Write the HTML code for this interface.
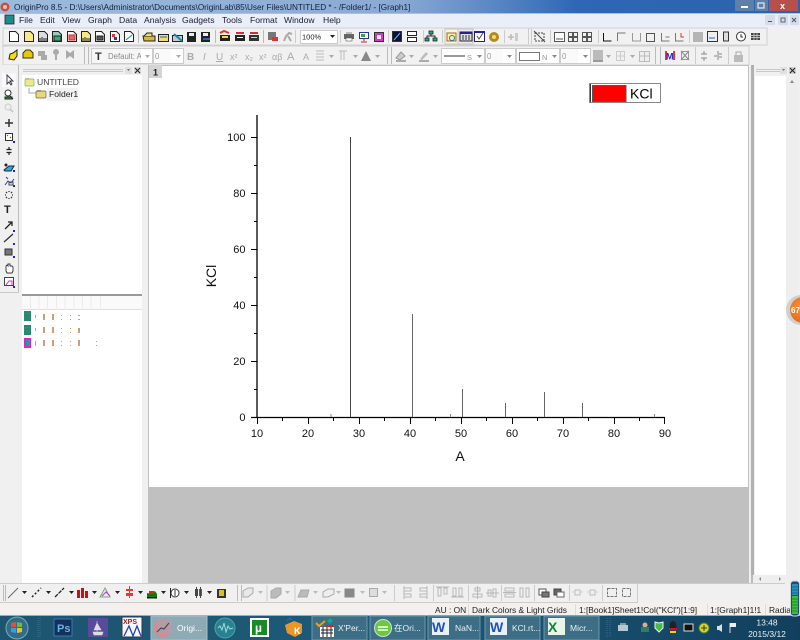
<!DOCTYPE html>
<html><head><meta charset="utf-8"><style>
html,body{margin:0;padding:0;width:800px;height:640px;overflow:hidden;background:#f0f0f0}
svg{display:block;filter:blur(.3px)}
text{font-family:"Liberation Sans",sans-serif}
</style></head><body>
<svg width="800" height="640" viewBox="0 0 800 640" xmlns="http://www.w3.org/2000/svg">
<defs>
<linearGradient id="tb2" x1="0" y1="0" x2="1" y2="0"><stop offset="0" stop-color="#9dbbdc"/><stop offset=".5" stop-color="#8aaad4"/><stop offset=".72" stop-color="#2f67b6"/><stop offset="1" stop-color="#2a62ae"/></linearGradient>
<linearGradient id="task" x1="0" y1="0" x2="1" y2="0"><stop offset="0" stop-color="#1d5570"/><stop offset=".5" stop-color="#1d5a78"/><stop offset="1" stop-color="#123f5e"/></linearGradient>
<radialGradient id="or" cx=".4" cy=".4"><stop offset="0" stop-color="#f8923a"/><stop offset="1" stop-color="#e8701c"/></radialGradient>
</defs>

<rect width="800" height="640" fill="#f0f0f0"/>

<!-- title bar -->
<rect x="0" y="0" width="800" height="13" fill="url(#tb2)"/>
<circle cx="5" cy="7" r="4.500" fill="#c8503c"/><circle cx="5" cy="7" r="2" fill="#eec0b0"/>
<text x="14" y="10" font-size="8.200" fill="#10203c">OriginPro 8.5 - D:\Users\Administrator\Documents\OriginLab\85\User Files\UNTITLED * - /Folder1/ - [Graph1]</text>
<rect x="735" y="0" width="19" height="11" fill="#5d7fa8"/>
<rect x="755" y="0" width="13" height="11" fill="#5d7fa8"/>
<rect x="769" y="0" width="29" height="11" fill="#b5504a"/>
<rect x="741" y="6" width="7" height="2" fill="#fff"/>
<rect x="758" y="3" width="6" height="5" fill="none" stroke="#fff"/>
<text x="780" y="9" font-size="9" font-weight="bold" fill="#fff">x</text>

<!-- menu bar -->
<rect x="0" y="13" width="800" height="14" fill="#e9eef9"/>
<rect x="0" y="13" width="800" height="1" fill="#a9c0e0"/>
<rect x="5" y="15" width="9" height="9" fill="#1f8c8c" stroke="#222" stroke-width=".8"/>
<g font-size="8.600" fill="#1c1c30">
<text x="19" y="23">File</text><text x="40" y="23">Edit</text><text x="62" y="23">View</text><text x="88" y="23">Graph</text><text x="119" y="23">Data</text><text x="144" y="23">Analysis</text><text x="182" y="23">Gadgets</text><text x="222" y="23">Tools</text><text x="250" y="23">Format</text><text x="284" y="23">Window</text><text x="323" y="23">Help</text>
</g>
<rect x="765" y="15" width="10" height="10" fill="#d5dcea"/><rect x="778" y="15" width="10" height="10" fill="#d5dcea"/><rect x="790" y="15" width="9" height="10" fill="#d5dcea"/>
<rect x="768" y="21" width="4" height="1" fill="#556"/><rect x="781" y="18" width="4" height="4" fill="none" stroke="#667"/><path d="M792 18l4 4m0-4l-4 4" stroke="#556"/>

<!-- toolbars -->
<rect x="0" y="27" width="800" height="38" fill="#f0f0f0"/>
<rect x="3" y="28" width="764" height="17" fill="#f1f1f1" stroke="#d0d0d0"/>
<rect x="3" y="46" width="746" height="19" fill="#f1f1f1" stroke="#d0d0d0"/>

<!-- toolbar 1 icons -->
<g stroke="#222" stroke-width="1">
<path d="M9.500 31.500h6l3 3v7h-9z" fill="#fff"/>
<path d="M24.500 31.500h6l3 3v7h-9z" fill="#f7e98a"/>
<path d="M38.500 31.500h6l3 3v7h-9z" fill="#ddd"/><path d="M40 38v3m2-4v4m2-3v3m2-3v3"/>
<path d="M52.500 31.500h6l3 3v7h-9z" fill="#9cb"/><path d="M54 36h7v5h-7z" fill="#3a7"/>
<path d="M67.500 31.500h6l3 3v7h-9z" fill="#fff"/><rect x="69" y="35" width="6" height="5" fill="#e66" stroke="#c33"/>
<path d="M81.500 31.500h6l3 3v7h-9z" fill="#f7e98a"/><path d="M83 38v3m2-4v4m2-3v3m2-3v3"/>
<path d="M95.500 31.500h6l3 3v7h-9z" fill="#fff"/><rect x="97" y="36" width="6" height="4" fill="#555"/>
<path d="M110.500 31.500h6l3 3v7h-9z" fill="#fff"/><rect x="112" y="34" width="3" height="3" fill="#e33" stroke="none"/><rect x="114" y="37" width="3" height="3" fill="#33d" stroke="none"/>
<path d="M124.500 31.500h6l3 3v7h-9z" fill="#fff"/><path d="M126 40l6-5" stroke="#289"/>
</g>
<rect x="138" y="30" width="1" height="13" fill="#bbb"/>
<g stroke="#222">
<path d="M143 36h12v5h-11z" fill="#d7b93a"/><path d="M144 36l3-3h5v3" fill="#f0dc70"/>
<path d="M158.500 34.500h10v7h-10z" fill="#f0dc70"/><path d="M160 37h7" stroke="#26a"/>
<path d="M172.500 35.500h10v6h-10z" fill="#bcd"/><path d="M174 34l8 7" stroke="#289" stroke-width="2"/>
<rect x="187.500" y="32.500" width="8" height="9" fill="#222"/><rect x="189" y="33" width="5" height="3" fill="#eee" stroke="none"/>
<rect x="201.500" y="32.500" width="8" height="9" fill="#222"/><rect x="203" y="33" width="5" height="3" fill="#eee" stroke="none"/><rect x="203" y="38" width="7" height="2" fill="#26c" stroke="none"/>
</g>
<rect x="215" y="30" width="1" height="13" fill="#bbb"/>
<rect x="220" y="35" width="10" height="6" fill="#222"/><path d="M220 33l4-2 5 2" stroke="#d33" stroke-width="2" fill="none"/><rect x="222" y="36" width="6" height="2" fill="#fd3"/>
<rect x="235" y="35" width="10" height="6" fill="#222"/><path d="M236 33h8" stroke="#c33" stroke-width="2"/><rect x="237" y="37" width="6" height="1" fill="#fff"/>
<rect x="249" y="35" width="10" height="6" fill="#333"/><path d="M250 33h8" stroke="#c33" stroke-width="2"/><rect x="251" y="37" width="6" height="1" fill="#ccc"/>
<rect x="263" y="30" width="1" height="13" fill="#bbb"/>
<rect x="268" y="32" width="8" height="8" fill="#777"/><rect x="272" y="37" width="6" height="4" fill="#d33"/>
<path d="M284 41l2-5 3-3 3 1m-4 2l3 5" stroke="#aaa" stroke-width="2" fill="none"/>
<rect x="295" y="30" width="1" height="13" fill="#ccc"/>
<rect x="300.500" y="30.500" width="37" height="13" fill="#fff" stroke="#ccc"/>
<text x="302" y="39.500" font-size="7.500" fill="#222">100%</text>
<path d="M330 35h5l-2.500 3z" fill="#222"/>
<rect x="340" y="30" width="1" height="13" fill="#ccc"/>
<rect x="344" y="34" width="10" height="5" fill="#666"/><rect x="346" y="32" width="6" height="2" fill="#bbb"/><rect x="346" y="38" width="6" height="3" fill="#fff" stroke="#444" stroke-width=".5"/>
<rect x="359.500" y="32.500" width="9" height="6" fill="#fff" stroke="#23a"/><path d="M364 38v3m-3 1h6" stroke="#a22"/><rect x="361" y="34" width="4" height="3" fill="#3a3"/>
<rect x="374.500" y="32.500" width="9" height="9" fill="#d3c" stroke="#333"/><rect x="377" y="35" width="4" height="4" fill="#fff"/>
<rect x="388" y="30" width="1" height="13" fill="#ccc"/>
<rect x="392.500" y="31.500" width="9" height="10" fill="#113" stroke="#333"/><path d="M394 40l6-7" stroke="#3cf"/>
<rect x="407.500" y="31.500" width="9" height="4" fill="#fff" stroke="#224"/><rect x="407.500" y="37.500" width="9" height="4" fill="#fff" stroke="#224"/>
<rect x="423" y="30" width="1" height="13" fill="#ccc"/>
<g fill="#2a8" stroke="#222" stroke-width=".8"><rect x="429" y="31" width="4" height="3"/><rect x="425" y="38" width="4" height="3"/><rect x="433" y="38" width="4" height="3"/></g>
<path d="M431 34v2m-4 2v-2h8v2" stroke="#222" fill="none"/>
<rect x="442" y="30" width="1" height="13" fill="#ccc"/>
<rect x="445" y="29" width="13" height="15" fill="#fbf6d8" stroke="#c8c8c8"/><rect x="447" y="33" width="9" height="8" fill="#fdf0a0" stroke="#963"/><circle cx="452" cy="38" r="2.500" fill="none" stroke="#27b"/>
<rect x="458" y="29" width="15" height="15" fill="#ececec" stroke="#c8c8c8"/><rect x="460" y="32" width="12" height="9" fill="#ddd" stroke="#223"/><rect x="460" y="32" width="12" height="2" fill="#228"/><path d="M463 35v5m3-5v5m3-5v5" stroke="#333"/>
<rect x="474.500" y="31.500" width="10" height="10" fill="#fff" stroke="#226"/><rect x="474" y="31" width="11" height="2" fill="#22a"/><path d="M477 36l2 3 4-6" stroke="#353" fill="none"/>
<circle cx="494" cy="37" r="5" fill="#b58a1c"/><circle cx="494" cy="37" r="2" fill="#f0dc70"/>
<rect x="504" y="30" width="1" height="13" fill="#ccc"/>
<path d="M508 37h6m-3-3v6" stroke="#bbb" stroke-width="1.500"/><rect x="515" y="33" width="3" height="8" fill="#ccc"/>
<rect x="528" y="28" width="1" height="16" fill="#ccc"/><rect x="531" y="28" width="1" height="16" fill="#ccc"/>
<rect x="535" y="33" width="9" height="8" fill="none" stroke="#444" stroke-dasharray="2 1"/><path d="M534 31l11 11" stroke="#444"/>
<rect x="550" y="30" width="1" height="13" fill="#ccc"/>
<g fill="none" stroke="#555">
<rect x="554.500" y="32.500" width="10" height="9" fill="#fff"/><path d="M556 39h7"/>
<rect x="568.500" y="32.500" width="4" height="4"/><rect x="573.500" y="32.500" width="4" height="4"/><rect x="568.500" y="37.500" width="4" height="4"/><rect x="573.500" y="37.500" width="4" height="4"/>
<rect x="582.500" y="32.500" width="4" height="4"/><rect x="587.500" y="32.500" width="4" height="4"/><rect x="582.500" y="37.500" width="4" height="4"/><rect x="587.500" y="37.500" width="4" height="4"/>
</g>
<rect x="598" y="30" width="1" height="13" fill="#ccc"/>
<g fill="none" stroke-width="1">
<path d="M603.500 33v8h8" stroke="#111"/><path d="M617.500 41v-8h8" stroke="#777"/><path d="M632.500 33v8h8v-8" stroke="#999"/><rect x="646.500" y="33.500" width="8" height="8" stroke="#555"/>
<path d="M661.500 33v8h8m-4-4h4" stroke="#777"/><path d="M675.500 33v8h8" stroke="#777"/><path d="M681 33v4h3" stroke="#d33"/>
</g>
<rect x="689" y="30" width="1" height="13" fill="#ccc"/>
<path d="M693 33h10M693 35h10M693 37h10M693 39h10M693 41h10" stroke="#777"/>
<rect x="707.500" y="31.500" width="10" height="10" fill="#eee" stroke="#333"/><path d="M709 38h6" stroke="#26c"/>
<rect x="723.500" y="32" width="5" height="9" fill="#ddd" stroke="#333"/>
<circle cx="741" cy="36.500" r="4.500" fill="#fff" stroke="#333"/><path d="M741 34v3h2" stroke="#333" fill="none"/>
<rect x="751" y="33" width="9" height="7" fill="#444"/><path d="M751 35.500h9M751 37.500h9M754 33v7M757 33v7" stroke="#ddd" stroke-width=".7"/>

<!-- toolbar 2 -->
<path d="M9 59l1-5 3-1 4-3v6l-3 4z" fill="#f5e000" stroke="#222"/>
<path d="M23 58v-5l3-3h4l3 3v5z" fill="#e8c800" stroke="#332"/>
<rect x="38" y="51" width="7" height="5" fill="#aaa"/><rect x="41" y="55" width="6" height="5" fill="#aaa"/>
<circle cx="56" cy="52" r="3" fill="#aaa"/><path d="M56 55v5" stroke="#aaa" stroke-width="2"/>
<path d="M66 50l4 3 4-3v9l-4-3-4 3z" fill="#aaa"/>
<rect x="84" y="47" width="1" height="17" fill="#bbb"/><rect x="88" y="47" width="1" height="17" fill="#bbb"/>
<rect x="91.500" y="48.500" width="61" height="15" fill="#f6f6f6" stroke="#ccc"/>
<text x="95" y="60" font-family="Liberation Serif" font-size="11" font-weight="bold" fill="#333">T</text>
<text x="108" y="59" font-size="7.800" fill="#8a8a8a">Default: A</text>
<rect x="141" y="49" width="11" height="14" fill="#fff"/><path d="M145 55h5l-2.500 3z" fill="#aaa"/>
<rect x="153.500" y="48.500" width="30" height="15" fill="#fafafa" stroke="#ccc"/>
<text x="155" y="59" font-size="7.800" fill="#999">0</text><rect x="171" y="49" width="12" height="14" fill="#fff"/><path d="M176 55h5l-2.500 3z" fill="#aaa"/>
<g fill="#aaa" font-family="Liberation Serif" font-size="9">
<text x="187" y="60" font-weight="bold" font-size="10">B</text><text x="203" y="60" font-style="italic" font-size="10">I</text><text x="216" y="60" text-decoration="underline" font-size="10">U</text>
<text x="230" y="60">x²</text><text x="245" y="60">x₂</text><text x="259" y="60">x²</text><text x="272" y="60">αβ</text>
<text x="287" y="60" font-size="11">A</text><text x="303" y="60">A</text>
</g>
<path d="M316 51h8M316 54h8M316 57h8M316 60h8" stroke="#bbb"/><path d="M329 55h5l-2.500 3z" fill="#aaa"/>
<path d="M339 51h8M341 51v9M344 51v9" stroke="#bbb"/><path d="M353 55h5l-2.500 3z" fill="#aaa"/>
<path d="M361 61h10l-5-10z" fill="#888"/><path d="M375 55h5l-2.500 3z" fill="#aaa"/>
<rect x="387" y="47" width="1" height="17" fill="#bbb"/><rect x="391" y="47" width="1" height="17" fill="#bbb"/>
<path d="M396 58l5-6 4 4-5 4z" fill="#ccc" stroke="#999"/><rect x="396" y="60" width="10" height="2" fill="#aaa"/><path d="M409 55h5l-2.500 3z" fill="#aaa"/>
<path d="M420 59l6-7 2 2-6 6z" fill="#bbb"/><rect x="419" y="60" width="10" height="2" fill="#aaa"/><path d="M433 55h5l-2.500 3z" fill="#aaa"/>
<rect x="441.500" y="48.500" width="43" height="15" fill="#fff" stroke="#ccc"/><path d="M444 56h21" stroke="#333"/><text x="467" y="60" font-size="7.500" fill="#999">S</text><path d="M477 55h5l-2.500 3z" fill="#888"/>
<rect x="485.500" y="48.500" width="30" height="15" fill="#fafafa" stroke="#ccc"/><text x="487" y="59" font-size="7.800" fill="#999">0</text><rect x="503" y="49" width="12" height="14" fill="#fff"/><path d="M507 55h5l-2.500 3z" fill="#888"/>
<rect x="516.500" y="48.500" width="43" height="15" fill="#fff" stroke="#ccc"/><rect x="519.500" y="52.500" width="20" height="8" fill="#fff" stroke="#777"/><text x="542" y="60" font-size="7.500" fill="#999">N</text><path d="M552 55h5l-2.500 3z" fill="#888"/>
<rect x="560.500" y="48.500" width="30" height="15" fill="#fafafa" stroke="#ccc"/><text x="562" y="59" font-size="7.800" fill="#999">0</text><rect x="578" y="49" width="12" height="14" fill="#fff"/><path d="M583 55h5l-2.500 3z" fill="#888"/>
<rect x="593" y="50" width="10" height="10" fill="#bbb"/><rect x="593" y="60" width="10" height="2" fill="#999"/><path d="M606 55h5l-2.500 3z" fill="#aaa"/>
<rect x="616.500" y="51.500" width="8" height="9" fill="none" stroke="#ccc"/><path d="M620.500 51v9M616 56h9" stroke="#ccc"/><path d="M630 55h5l-2.500 3z" fill="#aaa"/>
<rect x="639.500" y="51.500" width="10" height="10" fill="#eee" stroke="#bbb"/><path d="M640 56h9M644.500 51v10" stroke="#bbb"/>
<rect x="655" y="47" width="1" height="17" fill="#bbb"/><rect x="660" y="47" width="1" height="17" fill="#bbb"/>
<rect x="666" y="51" width="8" height="9" fill="#fff"/><rect x="665" y="51" width="2" height="9" fill="#e33"/><rect x="673" y="51" width="2" height="9" fill="#e33"/>
<text x="666" y="59.500" font-size="9" font-weight="bold" fill="#22c">M</text>
<rect x="681.500" y="51.500" width="7" height="8" fill="none" stroke="#999"/><path d="M681 51l8 9m0-9l-8 9" stroke="#888"/>
<rect x="695" y="47" width="1" height="17" fill="#ccc"/>
<path d="M704 51v3m0 4v3M701 54h6M701 58h6" stroke="#888" fill="none"/><path d="M718 51v9M714 56h3M719 54h3M719 57h3" stroke="#888"/>
<rect x="728" y="47" width="1" height="17" fill="#ccc"/>
<rect x="734" y="55" width="9" height="7" fill="#bbb"/><path d="M736 55v-3h5v3" fill="none" stroke="#aaa"/>

<!-- left toolbar -->
<rect x="0" y="65" width="22" height="528" fill="#f0f0f0"/>
<rect x="18" y="65" width="1" height="228" fill="#bdbdbd"/>
<rect x="0" y="292" width="19" height="1" fill="#c8c8c8"/>
<rect x="2" y="73" width="14" height="14" fill="#f9f9f9"/>
<path d="M7 75v9l2-2 2 3 1-1-2-3h3z" fill="#fff" stroke="#334" stroke-width=".9"/>
<circle cx="8" cy="93" r="3" fill="#fff" stroke="#333"/><path d="M5 97h7v2h-7zM10 96l3 3" stroke="#222" fill="#3a3"/>
<circle cx="8" cy="107" r="3" fill="none" stroke="#ccc"/><path d="M10 109l3 3" stroke="#ccc" stroke-width="2"/>
<path d="M9 119v8M5 123h8" stroke="#333" stroke-width="1.500"/>
<rect x="5.500" y="133.500" width="7" height="7" fill="#fff" stroke="#333"/><path d="M7 135l1 1m2 1l1 1" stroke="#555"/>
<path d="M9 147v3m0 2v3M6.500 149.500h5M6.500 152.500h5" stroke="#222" stroke-width="1.200"/>
<path d="M4 170l5-4h5l-3 5h-6z" fill="#16b3e3" stroke="#224"/><circle cx="6" cy="165" r="1.500" fill="#222"/>
<path d="M5 185l3-4 3 2 3-4" stroke="#33c" fill="none"/><path d="M6 177l2 2M9 182h4v3h-4z" stroke="#444" fill="none"/>
<path d="M9 191v1M9 198v1M5 195h1M12 195h1M6 192l1 1M12 192l-1 1M6 198l1-1M12 198l-1-1" stroke="#333" stroke-width="1.300"/>
<text x="4" y="213" font-family="Liberation Serif" font-size="11" font-weight="bold" fill="#222">T</text>
<path d="M5 229l7-7m-4 0h4v4" stroke="#222" stroke-width="1.300" fill="none"/>
<path d="M4 242l9-8" stroke="#333" stroke-width="1.300"/>
<rect x="5" y="249" width="7" height="6" fill="#777" stroke="#333"/>
<path d="M6 271v-5l1-1 1 1v-2h2v2l2 0 1 1v4l-1 2h-5z" fill="#fff" stroke="#333" stroke-width=".9"/>
<rect x="4.500" y="277.500" width="9" height="8" fill="#fff" stroke="#444"/><path d="M6 285l3-4h3v4" stroke="#c3c" fill="none"/>
<g fill="#22c"><rect x="13" y="141" width="2" height="2"/><rect x="13" y="170" width="2" height="2"/><rect x="13" y="185" width="2" height="2"/><rect x="13" y="230" width="2" height="2"/><rect x="13" y="243" width="2" height="2"/><rect x="13" y="256" width="2" height="2"/><rect x="13" y="286" width="2" height="2"/></g>

<!-- project explorer -->
<rect x="22" y="65" width="126" height="518" fill="#f0f0f0"/>
<rect x="22" y="75" width="120" height="508" fill="#fff"/>
<path d="M23 69.500h100M23 71.500h100" stroke="#c8c8c8"/>
<rect x="125" y="67" width="7" height="7" fill="#e0e0e0"/><rect x="134" y="67" width="7" height="7" fill="#d8d8d8"/>
<path d="M127 69h3l-1.500 2z" fill="#777"/><path d="M135 68l5 5m0-5l-5 5" stroke="#222"/>
<rect x="25" y="79" width="9" height="7" rx="1" fill="#f0e68c" stroke="#6b6" stroke-width=".7"/><rect x="25" y="78" width="4" height="2" fill="#bba"/>
<text x="37" y="85" font-size="8.600" fill="#444">UNTITLED</text>
<path d="M29 88v5h7" stroke="#aaa" fill="none"/>
<rect x="47" y="88" width="31" height="13" fill="#f2f2f2"/>
<rect x="36" y="91" width="10" height="7" rx="1" fill="#e9d778" stroke="#665" stroke-width=".7"/><rect x="37" y="90" width="4" height="2" fill="#998"/>
<text x="49" y="97" font-size="8.600" fill="#222">Folder1</text>
<rect x="22" y="294" width="120" height="2" fill="#999"/>
<rect x="22" y="296" width="120" height="13" fill="#fafafa"/>
<rect x="22" y="309" width="120" height="1" fill="#e0e0e0"/>
<path d="M30.500 296v14M39 296v14M47.500 296v14M56.500 296v14M65 296v14M74 296v14M82.500 296v14M91 296v14M100.500 296v14" stroke="#ececec"/>
<rect x="24" y="311" width="7" height="10" fill="#2a8a70"/><rect x="25" y="313" width="5" height="1" fill="#d44"/>
<rect x="24" y="325" width="7" height="10" fill="#2a8a70"/><rect x="25" y="327" width="5" height="1" fill="#d44"/>
<rect x="24" y="338" width="7" height="10" fill="#e020d0"/><rect x="26" y="340" width="4" height="6" fill="#16a0a0"/>
<g fill="#c9a078">
<rect x="35" y="315" width="1" height="3"/><rect x="43" y="314" width="2" height="6"/><rect x="52" y="314" width="2" height="6"/><rect x="61" y="315" width="1" height="1"/><rect x="61" y="319" width="1" height="1"/><rect x="70" y="315" width="1" height="1"/><rect x="70" y="319" width="1" height="1"/><rect x="78" y="315" width="2" height="1"/><rect x="78" y="319" width="2" height="1"/>
<rect x="35" y="328" width="1" height="3"/><rect x="43" y="327" width="2" height="6"/><rect x="52" y="327" width="2" height="6"/><rect x="61" y="328" width="1" height="1"/><rect x="61" y="332" width="1" height="1"/><rect x="70" y="328" width="1" height="1"/><rect x="70" y="332" width="1" height="1"/><rect x="78" y="328" width="2" height="5"/>
<rect x="35" y="341" width="1" height="5"/><rect x="43" y="340" width="2" height="6"/><rect x="52" y="340" width="2" height="6"/><rect x="61" y="341" width="1" height="1"/><rect x="61" y="345" width="1" height="1"/><rect x="70" y="341" width="1" height="1"/><rect x="70" y="345" width="1" height="1"/><rect x="78" y="340" width="2" height="6"/><rect x="96" y="341" width="1" height="1"/><rect x="96" y="345" width="1" height="1"/>
</g>

<!-- workspace -->
<rect x="148" y="65" width="601" height="518" fill="#c0c0c0"/>
<rect x="149" y="66" width="599" height="421" fill="#fff"/>
<rect x="149" y="65" width="13" height="13" fill="#d4d4d4"/>
<text x="153" y="75.500" font-size="9" font-weight="bold" fill="#222">1</text>
<rect x="749" y="65" width="6" height="518" fill="#f0f0f0"/>
<rect x="751" y="65" width="3" height="518" fill="#b0b0b0"/>

<!-- legend -->
<rect x="589.500" y="83.500" width="71" height="19" fill="#fff" stroke="#888"/>
<rect x="590" y="84" width="1" height="18" fill="#333"/>
<rect x="592.500" y="85.500" width="33.500" height="16" fill="#ff0000" stroke="#555"/>
<text x="630" y="98.500" font-size="14" fill="#000">KCl</text>

<!-- plot -->
<g stroke="#000" fill="none">
<path d="M257 115V417" stroke-width="1.300"/>
<path d="M251 417.500H665" stroke-width="1.200"/>
<path d="M251 361.500h6M251 305.500h6M251 249.500h6M251 193.500h6M251 137.500h6"/>
<path d="M254 389.500h3M254 333.500h3M254 277.500h3M254 221.500h3M254 165.500h3"/>
<path d="M257.500 417v7M308.500 417v7M359.500 417v7M410.500 417v7M461.500 417v7M512.500 417v7M563.500 417v7M614.500 417v7M664.500 417v7"/>
<path d="M282.500 417v4M333.500 417v4M384.500 417v4M435.500 417v4M486.500 417v4M537.500 417v4M588.500 417v4M639.500 417v4"/>
</g>
<g stroke="#444" fill="none">
<path d="M350.500 137V417"/>
<path d="M412.500 314V417" stroke="#666"/>
<path d="M462.500 389V417" stroke="#666"/>
<path d="M505.500 403V417" stroke="#666"/>
<path d="M544.500 392V417" stroke="#666"/>
<path d="M582.500 403V417" stroke="#666"/>
<path d="M331 414V417" stroke="#888"/>
<path d="M450.500 414V417" stroke="#888"/>
<path d="M654.500 414V417" stroke="#888"/>
</g>
<g font-size="11" fill="#111" text-anchor="end">
<text x="245.500" y="421">0</text><text x="245.500" y="365">20</text><text x="245.500" y="309">40</text><text x="245.500" y="253">60</text><text x="245.500" y="197">80</text><text x="245.500" y="141">100</text>
</g>
<g font-size="11" fill="#111" text-anchor="middle">
<text x="257" y="437">10</text><text x="308" y="437">20</text><text x="359" y="437">30</text><text x="410" y="437">40</text><text x="461" y="437">50</text><text x="512" y="437">60</text><text x="563" y="437">70</text><text x="614" y="437">80</text><text x="665" y="437">90</text>
</g>
<text x="460" y="461" font-size="14" fill="#111" text-anchor="middle">A</text>
<text transform="translate(216 276) rotate(-90)" font-size="14" fill="#111" text-anchor="middle">KCl</text>

<!-- right panel -->
<rect x="755" y="65" width="45" height="518" fill="#f0f0f0"/>
<rect x="755" y="76" width="31" height="507" fill="#fff"/>
<path d="M756 69.500h24M756 71.500h24" stroke="#c8c8c8"/>
<rect x="780" y="67" width="7" height="7" fill="#e0e0e0"/><rect x="789" y="67" width="7" height="7" fill="#d0d0d0"/>
<path d="M782 69h3l-1.500 2z" fill="#777"/><path d="M790 68l5 5m0-5l-5 5" stroke="#222"/>
<rect x="786" y="76" width="12" height="507" fill="#eeeeee"/>
<path d="M790 83h4l-2-3z" fill="#888"/>
<circle cx="801" cy="310" r="15" fill="#cfcfcf"/>
<circle cx="803" cy="310" r="13" fill="url(#or)"/>
<text x="791" y="313" font-size="8" font-weight="bold" fill="#fff">67</text>

<!-- bottom toolbar -->
<rect x="0" y="583" width="800" height="20" fill="#f0f0f0"/>
<rect x="0" y="583" width="785" height="1" fill="#ccc"/>
<rect x="0" y="602" width="637" height="1" fill="#ccc"/>
<rect x="3" y="585" width="1" height="16" fill="#bbb"/><rect x="5" y="585" width="1" height="16" fill="#bbb"/>
<path d="M8 598l10-10" stroke="#666"/><path d="M22 591h5l-2.500 3z" fill="#222"/>
<path d="M32 597l9-9" stroke="#222" stroke-width="1.500" stroke-dasharray="2 2"/><path d="M46 591h5l-2.500 3z" fill="#222"/>
<path d="M55 597l9-9" stroke="#222" stroke-width="1.300" stroke-dasharray="4 1"/><path d="M69 591h5l-2.500 3z" fill="#222"/>
<g fill="#cc1010"><rect x="77" y="590" width="3" height="8"/><rect x="81" y="588" width="3" height="10"/><rect x="85" y="591" width="3" height="7"/></g><path d="M92 591h5l-2.500 3z" fill="#222"/>
<path d="M100 597l5-9 5 9z" fill="#e8e8f8" stroke="#7a7"/><path d="M102 596l4-4 4 4" stroke="#c3c" fill="none"/><path d="M115 591h5l-2.500 3z" fill="#222"/>
<rect x="126" y="589" width="7" height="2" fill="#e33"/><rect x="126" y="593" width="7" height="3" fill="#e33"/><path d="M129.500 586v12" stroke="#e33"/><path d="M138 591h5l-2.500 3z" fill="#222"/>
<path d="M147 598v-5l4 1 4-3 2 3v4z" fill="#0a7a0a"/><rect x="147" y="597" width="10" height="1.500" fill="#111"/><rect x="149" y="591" width="5" height="3" fill="#d22"/><path d="M161 591h5l-2.500 3z" fill="#222"/>
<rect x="170" y="588" width="1" height="10" fill="#222"/><circle cx="175" cy="593" r="4" fill="#fff" stroke="#333"/><rect x="174.500" y="590" width="1" height="6" fill="#333"/><path d="M184 591h5l-2.500 3z" fill="#222"/>
<rect x="195" y="589" width="3" height="7" fill="#444"/><rect x="199" y="589" width="3" height="7" fill="#e02020"/><path d="M196.500 587v11M200.500 587v11" stroke="#444"/><path d="M207 591h5l-2.500 3z" fill="#222"/>
<rect x="217" y="589" width="9" height="9" fill="#333"/><rect x="219" y="590" width="5" height="6" fill="#d8c020"/>
<rect x="237" y="585" width="1" height="16" fill="#bbb"/><rect x="241" y="585" width="1" height="16" fill="#bbb"/>
<g fill="#bbb" stroke="#aaa">
<path d="M243 597v-6l5-3h5v5l-5 4z" fill="#e8e8e8"/><path d="M258 591h5l-2.500 3z" stroke="none"/>
<path d="M267 585v16" fill="none" stroke="#ccc"/>
<path d="M271 598v-7l5-3h5v6l-5 4z"/><path d="M285 591h5l-2.500 3z" stroke="none"/>
<path d="M295 585v16" fill="none" stroke="#ccc"/>
<path d="M298 597l3-7h8l-2 7z"/><path d="M313 591h5l-2.500 3z" stroke="none"/>
<path d="M323 597v-5l5-3h6v5l-6 3z" fill="#eee"/><path d="M336 591h5l-2.500 3z" stroke="none"/>
<rect x="345" y="589" width="9" height="8" fill="#888" stroke="#888"/><path d="M360 591h5l-2.500 3z" stroke="none"/>
<rect x="369.500" y="588.500" width="8" height="8" fill="#ddd"/><path d="M382 591h5l-2.500 3z" stroke="none"/>
</g>
<rect x="394" y="585" width="1" height="16" fill="#ccc"/>
<g fill="none" stroke="#b8b8b8">
<path d="M404 588h7v3h-7zM404 594h7v3h-7zM404 586v13"/>
<path d="M420 588h7v3h-7zM420 594h7v3h-7zM427 586v13"/>
<path d="M438 588h3v8h-3zM444 588h3v6h-3zM436 587h13"/>
<path d="M453 588h3v8h-3zM459 588h3v8h-3zM451 597h13"/>
<path d="M475 588h5v3h-5zM473 594h9v3h-9zM477.500 586v13"/>
<path d="M488 590h3v6h-3zM493 589h3v8h-3zM486 593h13"/>
<path d="M505 588h9v3h-9zM505 594h9v3h-9zM503 592.500h13"/>
<path d="M520 588h3v9h-3zM526 588h3v9h-3z"/>
</g>
<rect x="433" y="585" width="1" height="16" fill="#ccc"/>
<rect x="468" y="585" width="1" height="16" fill="#ccc"/>
<rect x="501" y="585" width="1" height="16" fill="#ccc"/>
<rect x="534" y="585" width="1" height="16" fill="#ccc"/>
<rect x="539" y="589" width="7" height="6" fill="#fff" stroke="#555"/><rect x="542" y="592" width="7" height="5" fill="#777" stroke="#444"/>
<rect x="554" y="589" width="7" height="6" fill="#666" stroke="#444"/><rect x="557" y="592" width="7" height="5" fill="#fff" stroke="#666"/>
<rect x="569" y="585" width="1" height="16" fill="#ccc"/>
<g fill="none" stroke="#bbb"><rect x="575" y="590" width="5" height="5"/><rect x="590" y="590" width="5" height="5"/></g>
<path d="M572 592h2M581 592h2M587 592h2M596 592h2" stroke="#ccc"/>
<rect x="602" y="585" width="1" height="16" fill="#ccc"/>
<rect x="607.500" y="588.500" width="9" height="8" fill="none" stroke="#777" stroke-dasharray="3 1"/><rect x="622.500" y="588.500" width="8" height="8" fill="none" stroke="#777" stroke-dasharray="3 1"/>
<rect x="637" y="583" width="1" height="20" fill="#ccc"/>
<rect x="638" y="584" width="150" height="18" fill="#f0f0f0"/>
<rect x="753" y="575" width="33" height="8" fill="#eee"/>
<path d="M761 577v4l-2-2zM779 577v4l2-2z" fill="#888"/>
<rect x="751" y="575" width="2" height="8" fill="#bbb"/>

<!-- status bar -->
<rect x="0" y="603" width="800" height="13" fill="#f3f0ee"/>
<path d="M468.500 604v11M575.500 604v11M707.500 604v11M765.500 604v11" stroke="#dcdcdc"/>
<g font-size="8.400" fill="#222">
<text x="435" y="613">AU : ON</text>
<text x="472" y="613">Dark Colors &amp; Light Grids</text>
<text x="579" y="613">1:[Book1]Sheet1!Col("KCl")[1:9]</text>
<text x="710" y="613">1:[Graph1]1!1</text>
<text x="769" y="613">Radian</text>
</g>

<!-- taskbar -->
<rect x="0" y="615" width="800" height="25" fill="url(#task)"/>
<rect x="0" y="615" width="800" height="1" fill="#8fb0bf"/>
<circle cx="17" cy="628" r="11" fill="#2f6e88" stroke="#7fa8b8"/>
<path d="M11 623l5-1v5h-5z" fill="#e8502c"/><path d="M17 622l5 1v4h-5z" fill="#74b838"/><path d="M11 628h5v5l-5-1z" fill="#3c9ae0"/><path d="M17 628h5v4l-5 1z" fill="#f0c020"/>
<path d="M38 618v20M40 618v20" stroke="#3a6e86" stroke-dasharray="1 1"/>
<rect x="54" y="619" width="18" height="17" fill="#13325a" stroke="#3a78b8"/>
<text x="57" y="632" font-size="11" font-weight="bold" fill="#6cb0e8">Ps</text>
<rect x="88" y="618" width="20" height="19" fill="#5a4a9c"/><path d="M93 632h10l-1 3h-8zM97 621v11M94 630l3-7 4 7z" fill="#ddd" stroke="#ddd" stroke-width=".6"/>
<rect x="122" y="617" width="20" height="20" fill="#f8f8ff" stroke="#334"/><text x="123" y="624" font-size="7" font-weight="bold" fill="#a02020">XPS</text><path d="M124 636l5-10 4 10 4-10 4 10" stroke="#2040c0" fill="none" stroke-width="1.300"/>
<rect x="151" y="616" width="56" height="24" fill="#8eaab4" stroke="#a8c0c8"/>
<circle cx="163" cy="628" r="9" fill="#d88" opacity=".9"/><rect x="158" y="618" width="14" height="16" fill="#9ab" opacity=".5"/><path d="M157 632l4-4 3 1 5-6" stroke="#345" fill="none"/>
<text x="177" y="631" font-size="8.500" fill="#fff">Origi...</text>
<circle cx="225" cy="628" r="10" fill="#2a7f90" stroke="#4aa"/><path d="M218 628l2-2 2 4 2-7 2 9 2-6 2 3 3-1" stroke="#9dd" fill="none"/>
<rect x="250" y="618" width="19" height="19" fill="#fff"/><rect x="252" y="620" width="15" height="15" fill="#1a8a28"/><text x="255" y="632" font-size="12" font-weight="bold" fill="#fff">µ</text>
<path d="M285 625l9-4 8 3v9l-7 4-8-4z" fill="#e89828"/><text x="294" y="634" font-size="9" font-weight="bold" fill="#fff">K</text><path d="M287 621l3-3 2 2" stroke="#36a" fill="none"/>
<rect x="312" y="616" width="55" height="24" fill="#3d6e86" stroke="#6f98a8"/>
<rect x="320" y="627" width="14" height="10" fill="#fff"/><path d="M321 630h12M321 633h12M323 627v10M327 627v10M331 627v10" stroke="#222"/><path d="M316 623l3 3 6-5" stroke="#e8a020" stroke-width="2" fill="none"/><path d="M330 618l3 3-3 3-3-3z" fill="#1a8"/><rect x="326" y="625" width="7" height="2" fill="#d22"/>
<text x="338" y="631" font-size="8.500" fill="#e8f0f4">X'Per...</text>
<rect x="370" y="616" width="55" height="24" fill="#3d6e86" stroke="#6f98a8"/>
<circle cx="383" cy="628" r="8.500" fill="#6cc83c" stroke="#cde"/><path d="M378 627h10M378 630h10" stroke="#fff" stroke-width="1.500"/>
<text x="394" y="631" font-size="8.500" fill="#e8f0f4" style="font-family:'Liberation Sans','Noto Sans CJK SC',sans-serif">在Ori...</text>
<rect x="428" y="616" width="52" height="24" fill="#3d6e86" stroke="#6f98a8"/>
<rect x="432" y="618" width="17" height="17" fill="#e8f0f8"/><text x="432" y="632" font-size="14" font-weight="bold" fill="#2050b8">W</text>
<text x="455" y="631" font-size="8.500" fill="#e8f0f4">NaN...</text>
<rect x="485" y="616" width="55" height="24" fill="#3d6e86" stroke="#6f98a8"/>
<rect x="490" y="618" width="17" height="17" fill="#e8f0f8"/><text x="490" y="632" font-size="14" font-weight="bold" fill="#2050b8">W</text>
<text x="512" y="631" font-size="8.500" fill="#e8f0f4">KCl.rt...</text>
<rect x="544" y="616" width="55" height="24" fill="#3d6e86" stroke="#6f98a8"/>
<rect x="548" y="618" width="17" height="17" fill="#e8f4e8"/><text x="548" y="632" font-size="14" font-weight="bold" fill="#1a8038">X</text>
<text x="570" y="631" font-size="8.500" fill="#e8f0f4">Micr...</text>
<path d="M607 618v20M610 618v20" stroke="#3a6e86" stroke-dasharray="1 1"/>
<rect x="618" y="625" width="10" height="6" fill="#b8c8d0"/><rect x="620" y="623" width="6" height="2" fill="#8a9aa4"/>
<circle cx="645" cy="625" r="2.500" fill="#d8b090"/><rect x="641" y="627" width="8" height="5" fill="#2a8060"/>
<path d="M655 622l4 1 4-1v6l-4 4-4-4z" fill="#50b848" stroke="#dfe"/>
<path d="M670 624a3 3 0 0 1 6 0l1 6h-8z" fill="#222"/><rect x="669" y="628" width="8" height="2" fill="#e02"/><rect x="670" y="631" width="6" height="2" fill="#fc0"/>
<rect x="684" y="624" width="9" height="7" fill="#111" stroke="#ddd"/>
<circle cx="704" cy="628" r="5" fill="#e8d020" stroke="#384"/><path d="M701 628h6m-3-3v6" stroke="#242"/>
<path d="M717 626h2l3-2v8l-3-2h-2z" fill="#ddd"/>
<path d="M730 623v10" stroke="#ddd"/><path d="M730 623h6v4h-6z" fill="#eee"/>
<text x="767" y="625.500" font-size="8.500" fill="#e8f0f4" text-anchor="middle">13:48</text>
<text x="767" y="637" font-size="8.500" fill="#e8f0f4" text-anchor="middle">2015/3/12</text>

<!-- meter at right -->
<rect x="790.500" y="581" width="9" height="35" rx="3" fill="#244a78" stroke="#cdd8e0"/>
<rect x="792" y="584" width="6" height="11" fill="#2a90c0"/>
<rect x="792" y="596" width="6" height="18" fill="#3cc030"/>
<path d="M792 587h6M792 590h6M792 593h6M792 599h6M792 602h6M792 605h6M792 608h6M792 611h6" stroke="#143" stroke-width=".6"/>
</svg>
</body></html>
